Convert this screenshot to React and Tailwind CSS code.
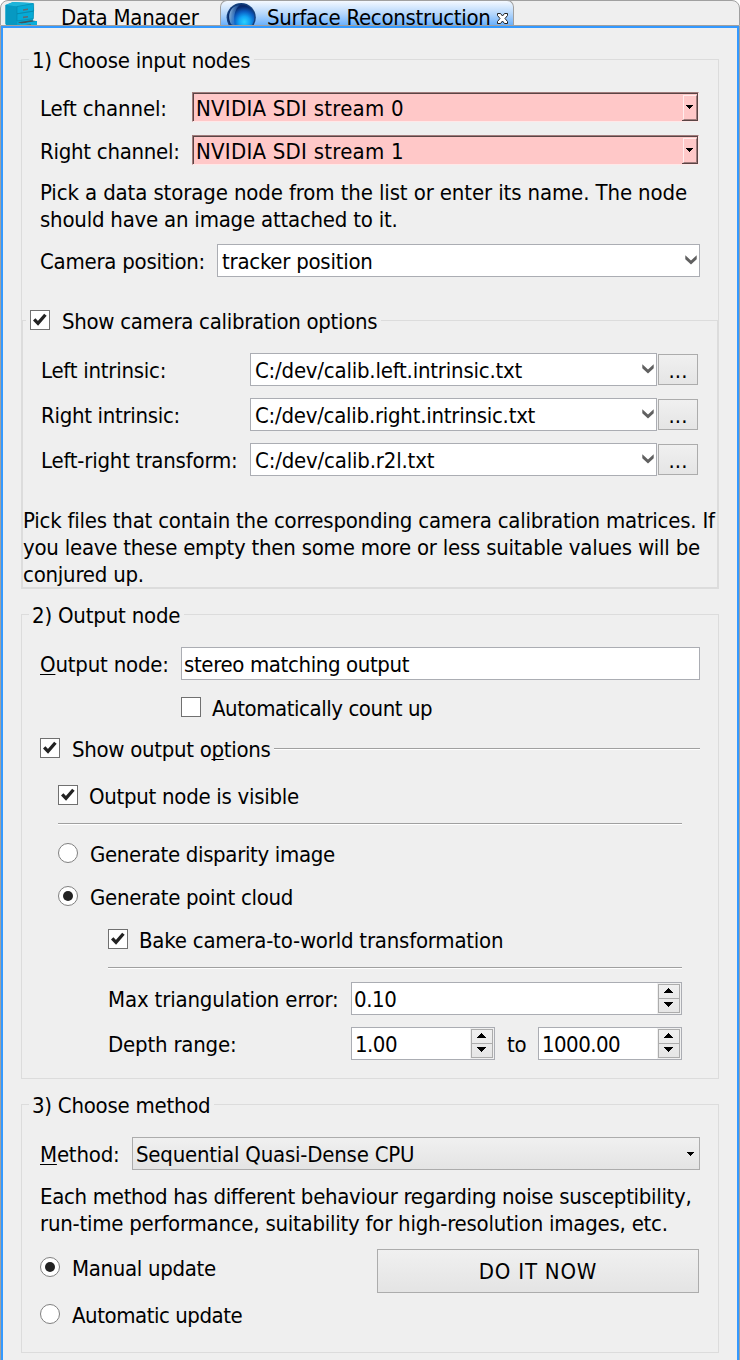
import React from 'react';
import clsx from 'clsx';

function Chevron() {
  return (
    <svg width="12" height="10" viewBox="0 0 12 10" className="mr-[2px] mb-px shrink-0">
      <path d="M0.3 0.2 L6 5.4 L11.7 0.2 L11.7 4.2 L6 9.6 L0.3 4.2 Z" fill="#606060" />
    </svg>
  );
}

function SmallArrow({ className }) {
  return (
    <svg width="7" height="4" viewBox="0 0 7 4" shapeRendering="crispEdges" className={className}>
      <path d="M0 0H7V1H6V2H5V3H4V4H3V3H2V2H1V1H0Z" fill="#000" />
    </svg>
  );
}

function Check({ on }) {
  return (
    <span className="flex h-5 w-5 shrink-0 items-center justify-center border border-[#707070] bg-white">
      {on && (
        <svg width="18" height="18" viewBox="0 0 18 18">
          <path d="M3.2 8.4 L7 12.4 L14.4 3.7" fill="none" stroke="#222" strokeWidth="3.3" />
        </svg>
      )}
    </span>
  );
}

function Radio({ on }) {
  return (
    <span className="flex h-5 w-5 shrink-0 items-center justify-center rounded-full border border-[#808080] bg-white">
      {on && <span className="h-[10px] w-[10px] rounded-full bg-[#222]" />}
    </span>
  );
}

function Text({ className, children }) {
  return <span className={clsx('block shrink-0 leading-[27px] whitespace-nowrap', className)}>{children}</span>;
}

function Option({ className, control, children, label }) {
  return (
    <label className={clsx('flex h-5 items-center', className)}>
      {control}
      <Text className={clsx('pt-[3px]', label)}>{children}</Text>
    </label>
  );
}

function StreamCombo({ children }) {
  return (
    <div className="flex h-[30px] w-[507px] border border-t-[#a07c7c] border-r-[#ffe8e8] border-b-[#ffe8e8] border-l-[#a07c7c]">
      <div className="flex flex-1 items-center justify-between border-t border-l border-[#5a4444] bg-[#ffc8c8]">
        <Text className="pt-px pl-[2px] tracking-[0.245px]">{children}</Text>
        <div className="flex h-[27px] w-4 border-r border-b border-[#5a4444]">
          <div className="mt-px ml-px flex flex-1 items-center border border-t-[#ffecec] border-r-[#a07c7c] border-b-[#a07c7c] border-l-[#ffecec] pl-[2px]">
            <SmallArrow className="mb-px" />
          </div>
        </div>
      </div>
    </div>
  );
}

function EditCombo({ className, text, children }) {
  return (
    <div className={clsx('flex h-[33px] items-center justify-between border border-[#abadb3] bg-white', className)}>
      <Text className={clsx('pt-[2px] pl-[4px]', text)}>{children}</Text>
      <Chevron />
    </div>
  );
}

function Spin({ className, text, children }) {
  return (
    <div className={clsx('flex h-[33px] items-center justify-between border border-[#abadb3] bg-white', className)}>
      <Text className={clsx('pt-[2px]', text)}>{children}</Text>
      <div className="h-[31px] w-6 bg-[#f0f0f0] pt-px pl-px">
        <div className="flex h-[29px] w-[22px] flex-col border border-[#acacac] bg-linear-to-b from-[#f0f0f0] to-[#e6e6e6]">
          <div className="flex h-[14px] border-b border-[#acacac] pt-[3px] pl-[5px]">
            <svg width="9" height="5" viewBox="0 0 9 5" shapeRendering="crispEdges">
              <path d="M4 0H5V1H6V2H7V3H8V4H9V5H0V4H1V3H2V2H3V1H4Z" fill="#000" />
            </svg>
          </div>
          <div className="flex pt-[3px] pl-[5px]">
            <svg width="9" height="5" viewBox="0 0 9 5" shapeRendering="crispEdges">
              <path d="M0 0H9V1H8V2H7V3H6V4H5V5H4V4H3V3H2V2H1V1H0Z" fill="#000" />
            </svg>
          </div>
        </div>
      </div>
    </div>
  );
}

function Rule({ className }) {
  return <div className={clsx('h-[2px] border-t border-b border-t-[#a0a0a0] border-b-white', className)} />;
}

function Legend({ className, children }) {
  return (
    <div className="-mt-[15px] ml-[7px] flex h-[29px]">
      <div className={clsx('bg-[#efefef] pl-[3px] leading-[27px] whitespace-nowrap', className)}>
        <span className="block pt-[2px]">{children}</span>
      </div>
    </div>
  );
}

function FileRow({ className, label, labelClass, text, children }) {
  return (
    <div className={clsx('ml-[18px] flex h-[33px] items-center', className)}>
      <Text className={clsx('w-[209px] pt-[2px]', labelClass)}>{label}</Text>
      <EditCombo className="w-[407px]" text={text}>{children}</EditCombo>
      <button className="ml-px flex h-[31px] w-10 justify-center border border-[#acacac] bg-linear-to-b from-[#f0f0f0] to-[#e5e5e5] leading-[27px]">
        <span className="pt-[2px] tracking-[0.1px]">...</span>
      </button>
    </div>
  );
}

function CabinetIcon() {
  return (
    <svg width="32" height="25" viewBox="0 0 32 25" className="mt-px ml-[5px] shrink-0">
      <path d="M0.5 3 L8 0 L28 1 L29 8 L28 19 L32 19 V25 H3 L0.5 22Z" fill="#08a5d0" />
      <path d="M0.5 3 L8 0 L29 1.2 L12 4.5Z" fill="#1fb4da" />
      <path d="M0.5 3 L12 4.5 V25 H3 L0.5 22Z" fill="#0799c2" />
      <path d="M12 4.5 L28.6 1.6 V9 L12 11.8Z M12 11.8 L28.4 9.2 V16.6 L12 19Z" fill="#06aad6" stroke="#0785a8" strokeWidth="0.6" />
      <path d="M18 7.2 L23 6.5 V8 L18 8.8Z M18 14.6 L23 13.9 V15.4 L18 16.2Z" fill="#5d6a74" />
      <path d="M13 20.2 L26 18.2 L31 19 L17 21.8Z" fill="#3f5560" />
      <path d="M15 21.8 L32 19.2 V25 H15Z" fill="#0aaedb" />
      <path d="M20 23 L26 22.2 V24 L20 24.8Z" fill="#54606a" />
    </svg>
  );
}

function SphereIcon() {
  return (
    <svg width="30" height="25" viewBox="0 0 30 25" className="mt-px shrink-0">
      <defs>
        <radialGradient id="core" cx="0.62" cy="0.66" r="0.58">
          <stop offset="0" stopColor="#2ad2ff" />
          <stop offset="0.35" stopColor="#12a4f4" />
          <stop offset="0.68" stopColor="#0b5cc0" />
          <stop offset="1" stopColor="#06286c" />
        </radialGradient>
        <linearGradient id="gloss" x1="0" y1="0" x2="1" y2="0.3">
          <stop offset="0" stopColor="#b4e2ff" stopOpacity="0.9" />
          <stop offset="1" stopColor="#2f86dc" stopOpacity="0.1" />
        </linearGradient>
      </defs>
      <circle cx="15.2" cy="15.6" r="14.6" fill="#123f7c" />
      <circle cx="15.2" cy="15.6" r="13.2" fill="url(#core)" />
      <path d="M5 22 C0 12 6 3 14 3 C9 7 7 14 9 24Z" fill="url(#gloss)" />
    </svg>
  );
}

export default function App() {
  return (
    <div
      className="flex h-[1360px] w-[740px] flex-col overflow-hidden bg-[#efefef] text-[22px] text-black"
      style={{ fontFamily: '"DejaVu Sans Condensed", "DejaVu Sans", sans-serif' }}
    >
      <div className="h-[26px] shrink-0 overflow-hidden bg-white">
        <div className="flex h-[26px] overflow-hidden rounded-t-[8px] border border-[#a0a0a0] bg-[#efefef]">
          <div className="-mb-px -ml-px flex h-[26px] w-[220px] overflow-hidden">
            <CabinetIcon />
            <span className="ml-[24px] pt-[3px] leading-[27px] tracking-[-0.23px]">Data Manager</span>
          </div>
          <div className="-mt-px -mb-px flex h-[27px] w-[294px] shrink-0 overflow-hidden rounded-t-[7px] border-x border-t border-[#a0a0a0] bg-linear-to-b from-[#f4f9ff] via-[#b4d6fb] to-[#5aa9fb] pl-[5px]">
            <SphereIcon />
            <span className="ml-[11px] w-[223px] pt-[3px] leading-[27px] whitespace-nowrap tracking-[-0.28px]">Surface Reconstruction</span>
            <svg width="11" height="11" viewBox="0 0 11 11" className="mt-[12px] ml-[7px] shrink-0">
              <path d="M.5 .5 H3.5 L5.5 3 L7.5 .5 H10.5 V2.5 L8 5.5 L10.5 8.5 V10.5 H7.5 L5.5 8 L3.5 10.5 H.5 V8.5 L3 5.5 L.5 2.5Z" fill="#fff" stroke="#222" />
            </svg>
          </div>
        </div>
      </div>

      <div className="flex flex-1 border-x border-[#a0a0a0]">
        <div className="flex-1 border-x-2 border-t-2 border-[#3399ff] pl-[18px]">
          <section className="mt-[31px] h-[530px] w-[698px] border border-[#dcdcdc]">
            <Legend className="w-[225px] tracking-[-0.22px]">1) Choose input nodes</Legend>
            <div className="mt-[18px] ml-[18px] flex items-center">
              <Text className="w-[152px] pt-[2px] tracking-[-0.12px]">Left channel:</Text>
              <StreamCombo>NVIDIA SDI stream 0</StreamCombo>
            </div>
            <div className="mt-[13px] ml-[18px] flex items-center">
              <Text className="w-[152px] pt-[2px] tracking-[-0.27px]">Right channel:</Text>
              <StreamCombo>NVIDIA SDI stream 1</StreamCombo>
            </div>
            <p className="mt-[14px] ml-[18px] leading-[27px] whitespace-nowrap">
              <span className="block tracking-[-0.122px]">Pick a data storage node from the list or enter its name. The node</span>
              <span className="block tracking-[-0.22px]">should have an image attached to it.</span>
            </p>
            <div className="mt-[11px] ml-[18px] flex items-center">
              <Text className="w-[177px] pt-[2px] tracking-[-0.25px]">Camera position:</Text>
              <EditCombo className="w-[483px]" text="tracking-[-0.25px]">tracker position</EditCombo>
            </div>

            <section className="mt-[43px] h-[268px] w-[696px] border border-[#dcdcdc]">
              <div className="-mt-[15px] ml-[3px] flex h-[29px] w-[355px] bg-[#efefef]">
                <Option className="mt-[4px] ml-[4px]" control={<Check on />} label="ml-[12px] tracking-[-0.3px]">
                  Show camera calibration options
                </Option>
              </div>
              <FileRow className="mt-[18px]" label="Left intrinsic:" labelClass="tracking-[-0.24px]" text="tracking-[-0.21px]">
                C:/dev/calib.left.intrinsic.txt
              </FileRow>
              <FileRow className="mt-[12px]" label="Right intrinsic:" labelClass="tracking-[-0.3px]" text="tracking-[-0.25px]">
                C:/dev/calib.right.intrinsic.txt
              </FileRow>
              <FileRow className="mt-[12px]" label="Left-right transform:" labelClass="tracking-[-0.202px]" text="tracking-[-0.18px]">
                C:/dev/calib.r2l.txt
              </FileRow>
              <p className="mt-[31px] leading-[27px] whitespace-nowrap">
                <span className="block tracking-[-0.229px]">Pick files that contain the corresponding camera calibration matrices. If</span>
                <span className="block tracking-[-0.235px]">you leave these empty then some more or less suitable values will be</span>
                <span className="block tracking-[-0.235px]">conjured up.</span>
              </p>
            </section>
          </section>

          <section className="mt-[25px] h-[465px] w-[698px] border border-[#dcdcdc]">
            <Legend className="w-[155px] tracking-[-0.2px]">2) Output node</Legend>
            <div className="mt-[18px] ml-[18px] flex items-center">
              <Text className="w-[141px] pt-[2px] tracking-[-0.2px]">
                <span className="underline decoration-1 underline-offset-[2px]">O</span>utput node:
              </Text>
              <div className="flex h-[33px] w-[519px] items-center border border-[#abadb3] bg-white">
                <Text className="pt-[2px] pl-[2px] tracking-[-0.37px]">stereo matching output</Text>
              </div>
            </div>
            <Option className="mt-[17px] ml-[159px]" control={<Check />} label="ml-[11px] tracking-[-0.442px]">
              Automatically count up
            </Option>
            <div className="mt-[21px] ml-[18px] flex h-5 items-center">
              <Option control={<Check on />} label="ml-[12px] w-[202px] tracking-[-0.3px]">
                Show output o<span className="underline decoration-1 underline-offset-[2px] [text-decoration-skip-ink:none]">p</span>tions
              </Option>
              <Rule className="mt-px w-[426px]" />
            </div>
            <Option className="mt-[27px] ml-[36px]" control={<Check on />} label="ml-[11px] tracking-[-0.28px]">
              Output node is visible
            </Option>
            <Rule className="mt-[18px] ml-[36px] w-[624px]" />
            <Option className="mt-[18px] ml-[36px]" control={<Radio />} label="ml-[12px] tracking-[-0.333px]">
              Generate disparity image
            </Option>
            <Option className="mt-[23px] ml-[36px]" control={<Radio on />} label="ml-[12px] tracking-[-0.3px]">
              Generate point cloud
            </Option>
            <Option className="mt-[23px] ml-[86px]" control={<Check on />} label="ml-[11px] tracking-[-0.217px]">
              Bake camera-to-world transformation
            </Option>
            <Rule className="mt-[18px] ml-[86px] w-[574px]" />
            <div className="mt-[13px] ml-[86px] flex items-center">
              <Text className="w-[243px] pt-[2px] tracking-[-0.158px]">Max triangulation error:</Text>
              <Spin className="w-[331px]" text="pl-[2px] tracking-[-0.4px]">0.10</Spin>
            </div>
            <div className="mt-[12px] ml-[86px] flex items-center">
              <Text className="w-[243px] pt-[2px] tracking-[-0.2px]">Depth range:</Text>
              <Spin className="w-[144px]" text="pl-[3px] tracking-[-0.5px]">1.00</Spin>
              <Text className="w-[43px] pt-[2px] pl-[12px] tracking-[-0.2px]">to</Text>
              <Spin className="w-[144px]" text="pl-[3px] tracking-[-0.539px]">1000.00</Spin>
            </div>
          </section>

          <section className="mt-[25px] h-[249px] w-[698px] border border-[#dcdcdc]">
            <Legend className="w-[185px] tracking-[-0.25px]">3) Choose method</Legend>
            <div className="mt-[18px] ml-[18px] flex items-center">
              <Text className="w-[92px] pt-[2px] tracking-[-0.2px]">
                <span className="underline decoration-1 underline-offset-[2px]">M</span>ethod:
              </Text>
              <div className="flex h-[33px] w-[568px] items-center justify-between border border-[#acacac] bg-linear-to-b from-[#f0f0f0] to-[#e4e4e4]">
                <Text className="pt-[2px] pl-[3px] tracking-[-0.22px]">Sequential Quasi-Dense CPU</Text>
                <SmallArrow className="mr-[5px]" />
              </div>
            </div>
            <p className="mt-[13px] ml-[18px] leading-[27px] whitespace-nowrap">
              <span className="block tracking-[-0.31px]">Each method has different behaviour regarding noise susceptibility,</span>
              <span className="block tracking-[-0.24px]">run-time performance, suitability for high-resolution images, etc.</span>
            </p>
            <div className="mt-[12px] ml-[18px] flex">
              <div className="w-[337px] pt-[8px]">
                <Option control={<Radio on />} label="ml-[12px] tracking-[-0.315px]">Manual update</Option>
                <Option className="mt-[27px]" control={<Radio />} label="ml-[12px] tracking-[-0.45px]">Automatic update</Option>
              </div>
              <button className="flex h-[44px] w-[322px] items-center justify-center border border-[#acacac] bg-linear-to-b from-[#f0f0f0] to-[#e4e4e4]">
                <Text className="tracking-[0.789px]">DO IT NOW</Text>
              </button>
            </div>
          </section>
        </div>
      </div>
    </div>
  );
}
